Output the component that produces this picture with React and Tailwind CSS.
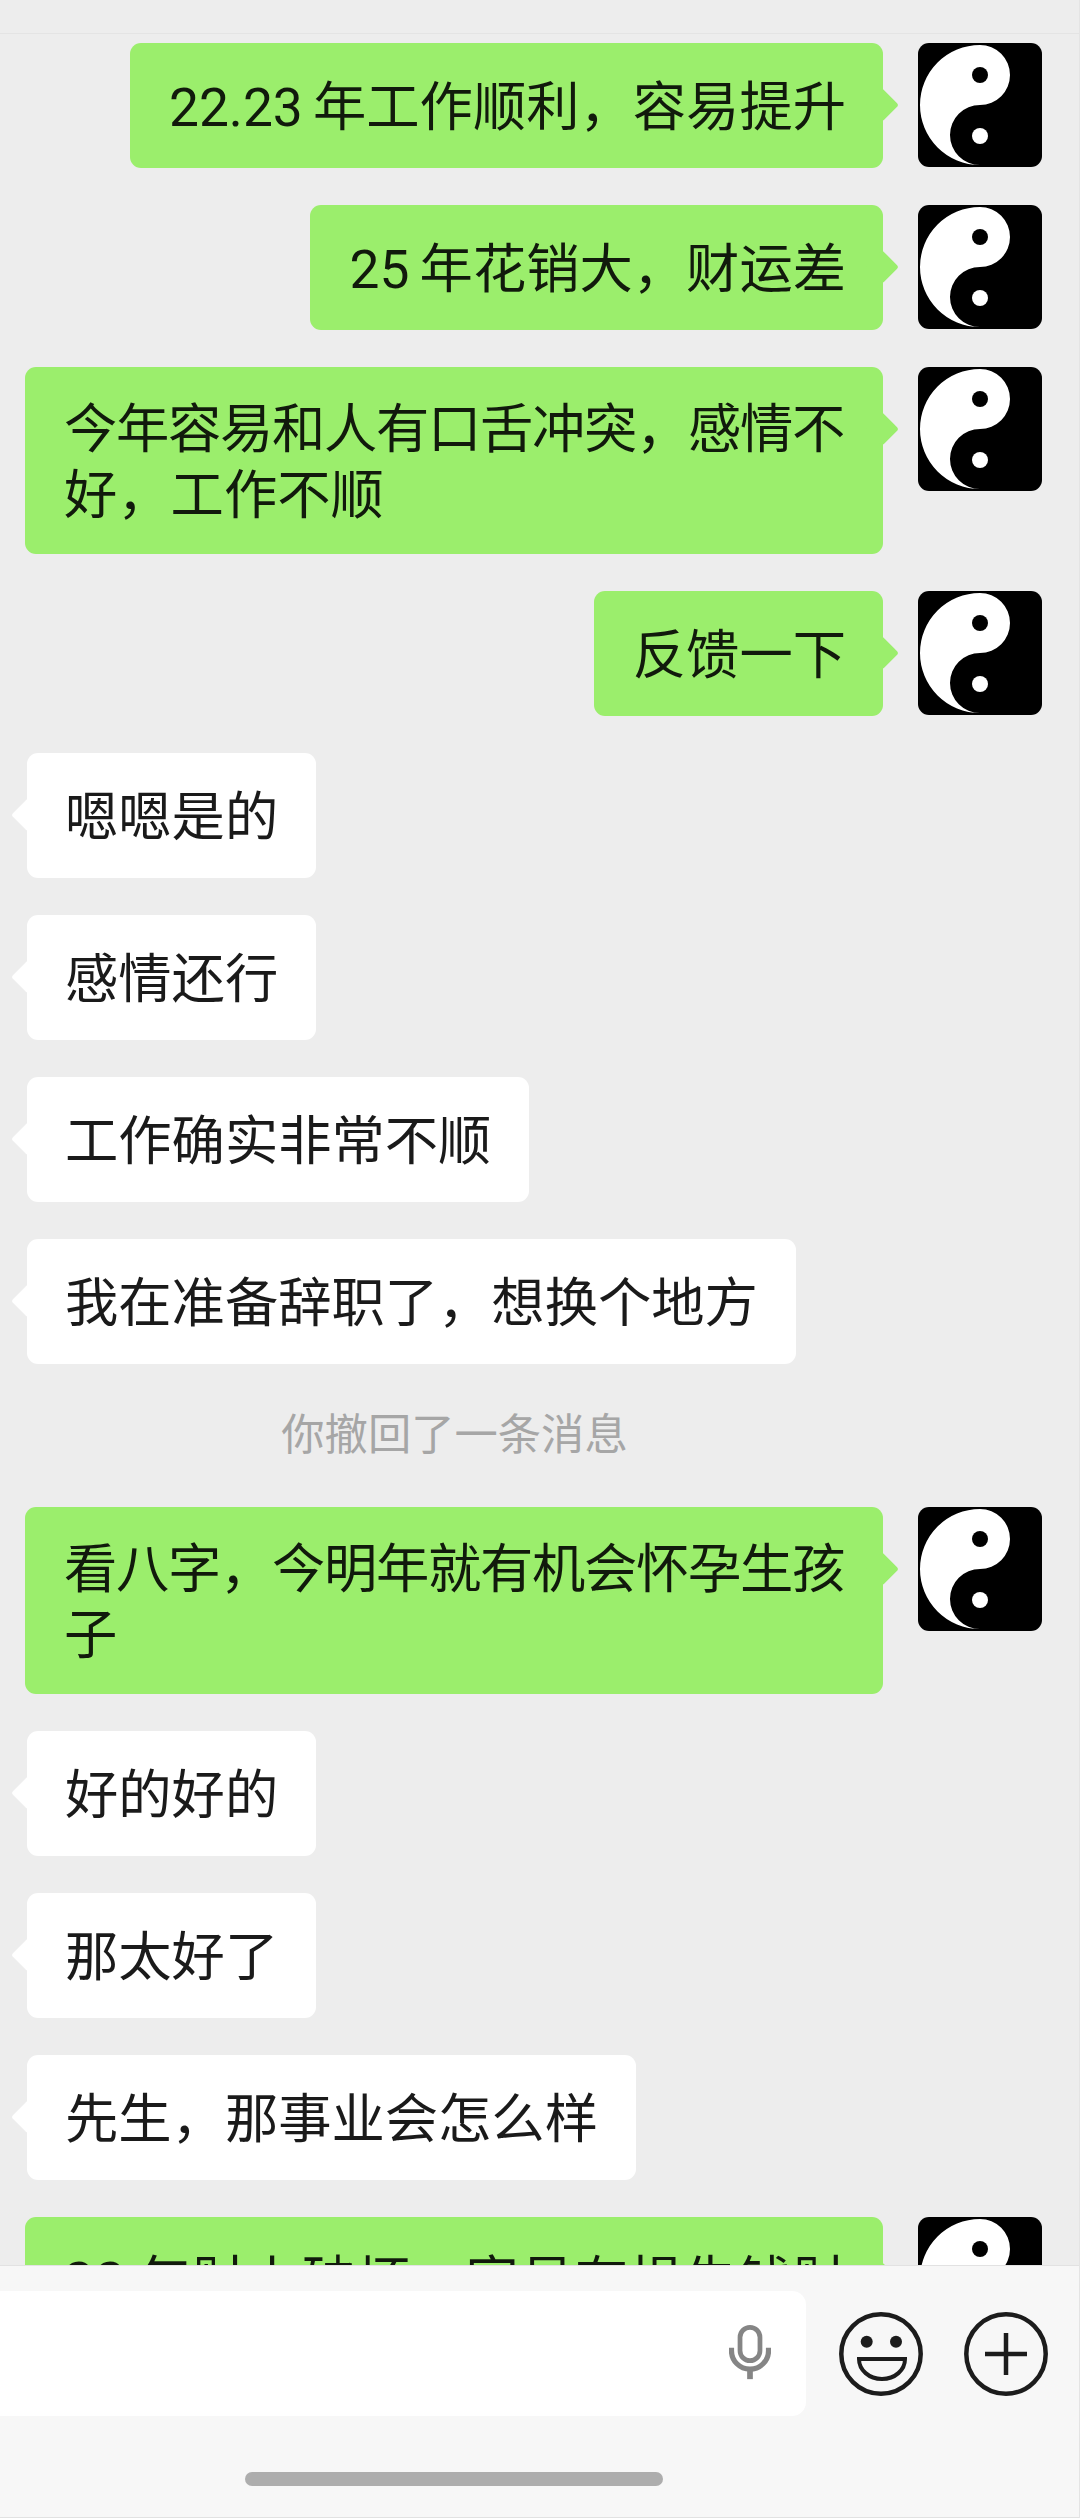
import React from 'react';

const messages = [
  { side: 'me', text: '22.23 年工作顺利，容易提升' },
  { side: 'me', text: '25 年花销大，财运差' },
  { side: 'me', first: '今年容易和人有口舌冲突，感情不', firstClass: 'tracking-[-1.3px]', text: '好，工作不顺' },
  { side: 'me', text: '反馈一下' },
  { side: 'other', text: '嗯嗯是的' },
  { side: 'other', text: '感情还行' },
  { side: 'other', text: '工作确实非常不顺' },
  { side: 'other', text: '我在准备辞职了，想换个地方' },
  { side: 'system', text: '你撤回了一条消息' },
  { side: 'me', first: '看八字，今明年就有机会怀孕生孩', firstClass: 'tracking-[-1.3px]', text: '子' },
  { side: 'other', text: '好的好的' },
  { side: 'other', text: '那太好了' },
  { side: 'other', text: '先生，那事业会怎么样' },
  { side: 'me', first: '22 年财上破坏，容易有损失钱财', firstClass: 'tracking-[1.3px]', text: '' },
];

function Avatar() {
  return (
    <svg width="124" height="124" viewBox="0 0 124 124" className="shrink-0">
      <rect width="124" height="124" rx="11" fill="#000" />
      <path d="M62 2A60 60 0 0 0 62 122A30 30 0 0 1 62 62A30 30 0 0 0 62 2Z" fill="#fff" />
      <circle cx="62" cy="32" r="8" fill="#000" />
      <circle cx="62" cy="93" r="8" fill="#fff" />
    </svg>
  );
}

function MyMessage({ first, firstClass, text }) {
  return (
    <div className="flex justify-end items-start gap-[35px] pr-[37px]">
      <div className="relative min-h-[125px] flex items-center pl-[39px] pr-[37px] pt-[30px] pb-[25px] rounded-[11px] bg-[#9bee6c] text-[#111a0c] [word-spacing:-3px]">
        <span className="absolute -right-[11px] top-[50px] w-[24px] h-[24px] rotate-45 rounded-[3px] bg-[#9bee6c]" />
        <div className="relative">
          {first && <span className={`block w-[782px] whitespace-nowrap ${firstClass}`}>{first}</span>}
          {text}
        </div>
      </div>
      <Avatar />
    </div>
  );
}

function OtherMessage({ text }) {
  return (
    <div className="flex justify-start pl-[27px]">
      <div className="relative min-h-[125px] flex items-center px-[38px] pt-[30px] pb-[25px] rounded-[11px] bg-white text-[#1a1a1a]">
        <span className="absolute -left-[11px] top-[50px] w-[24px] h-[24px] rotate-45 rounded-[3px] bg-white" />
        <span className="relative">{text}</span>
      </div>
    </div>
  );
}

function MicIcon() {
  return (
    <svg width="42" height="57" viewBox="0 0 44 60" fill="none" stroke="#858585" strokeWidth="5">
      <rect x="11.5" y="2.5" width="21" height="35" rx="10.5" />
      <path d="M2.5 24V27A19.5 19.5 0 0 0 41.5 27V24" strokeWidth="5.5" />
      <path d="M22 46V57" strokeWidth="6" />
    </svg>
  );
}

function SmileIcon() {
  return (
    <svg width="84" height="84" viewBox="0 0 84 84" fill="none" stroke="#1c1c1c" strokeWidth="4.5">
      <circle cx="42" cy="42" r="39.7" />
      <circle cx="27.7" cy="29.7" r="6" fill="#1c1c1c" stroke="none" />
      <circle cx="57" cy="29.7" r="6" fill="#1c1c1c" stroke="none" />
      <path d="M20 47H66C66 58 56 67 43 67C30 67 20 58 20 47Z" strokeWidth="4" />
    </svg>
  );
}

function PlusIcon() {
  return (
    <svg width="84" height="84" viewBox="0 0 84 84" fill="none" stroke="#1c1c1c" strokeWidth="4.5">
      <circle cx="42" cy="42" r="39.7" />
      <path d="M21 42H63M42 21V63" />
    </svg>
  );
}

export default function App() {
  return (
    <div className="w-[1080px] h-[2518px] flex flex-col overflow-hidden bg-[#ededed] border-r border-[#e4e4e4] text-[53.3px] leading-[66px] font-['Roboto','Noto_Sans_CJK_SC',sans-serif]">
      <div className="h-[34px] shrink-0 border-b border-[#e4e4e4]" />

      {/* Chat list */}
      <div className="flex-1 min-h-0 overflow-hidden flex flex-col gap-[37px] pt-[9px]">
        {messages.map((msg, i) => {
          if (msg.side === 'system') {
            return (
              <div key={i} className="h-[69px] shrink-0 flex items-center justify-center pr-[170px] text-[43.3px] text-[#a6a6a6]">
                {msg.text}
              </div>
            );
          }
          return msg.side === 'me' ? (
            <MyMessage key={i} first={msg.first} firstClass={msg.firstClass} text={msg.text} />
          ) : (
            <OtherMessage key={i} text={msg.text} />
          );
        })}
      </div>

      {/* Input bar */}
      <div className="h-[253px] shrink-0 flex flex-col bg-[#f7f7f7] border-t border-b border-[#e2e2e2]">
        <div className="flex items-center pt-[25px]">
          <div className="w-[806px] h-[125px] flex items-center justify-end pr-[35px] bg-white rounded-r-[14px]">
            <MicIcon />
          </div>
          <div className="ml-[33px]">
            <SmileIcon />
          </div>
          <div className="ml-[41px]">
            <PlusIcon />
          </div>
        </div>
        <div className="w-[418px] h-[14px] mt-[56px] ml-[245px] rounded-full bg-[#adadad]" />
      </div>
    </div>
  );
}
